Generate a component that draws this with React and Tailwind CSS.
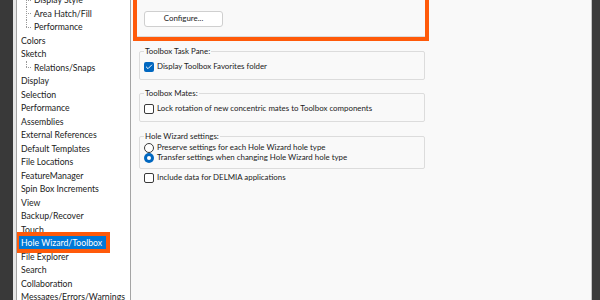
import { Check } from "lucide-react";

const items = [
  { label: "Display Style", child: true },
  { label: "Area Hatch/Fill", child: true },
  { label: "Performance", child: true, last: true },
  { label: "Colors" },
  { label: "Sketch" },
  { label: "Relations/Snaps", child: true, last: true },
  { label: "Display" },
  { label: "Selection" },
  { label: "Performance" },
  { label: "Assemblies" },
  { label: "External References" },
  { label: "Default Templates" },
  { label: "File Locations" },
  { label: "FeatureManager" },
  { label: "Spin Box Increments" },
  { label: "View" },
  { label: "Backup/Recover" },
  { label: "Touch" },
  { label: "Hole Wizard/Toolbox", selected: true },
  { label: "File Explorer" },
  { label: "Search" },
  { label: "Collaboration" },
  { label: "Messages/Errors/Warnings" },
];

function TreeRow({ item }) {
  return (
    <div className="flex items-center h-[13.5px] whitespace-nowrap">
      {item.child && (
        <span className="relative w-[13px] h-full shrink-0">
          <span
            className={`absolute left-[5px] top-0 border-l border-dotted border-[#9a9a9a] ${
              item.last ? "h-1/2" : "h-full"
            }`}
          />
          <span className="absolute left-[5px] top-1/2 w-[5px] border-t border-dotted border-[#9a9a9a]" />
        </span>
      )}
      {item.selected ? (
        <span className="-ml-[2px] pl-[2px] w-[87px] overflow-hidden bg-[#0078d7] text-white leading-[13px] outline-4 outline-[#ff5a0a]">
          {item.label}
        </span>
      ) : (
        <span>{item.label}</span>
      )}
    </div>
  );
}

function Checkbox({ checked }) {
  return checked ? (
    <span className="w-[10px] h-[10px] rounded-[2px] bg-[#0067c0] flex items-center justify-center shrink-0">
      <Check size={8} strokeWidth={3} className="text-white" />
    </span>
  ) : (
    <span className="w-[10px] h-[10px] rounded-[2px] border border-[#3a3a3a] bg-white shrink-0" />
  );
}

function Radio({ checked }) {
  return checked ? (
    <span className="w-[10px] h-[10px] rounded-full bg-[#0067c0] flex items-center justify-center shrink-0">
      <span className="w-[4px] h-[4px] rounded-full bg-white" />
    </span>
  ) : (
    <span className="w-[10px] h-[10px] rounded-full border border-[#3a3a3a] bg-white shrink-0" />
  );
}

function Group({ title, className, children }) {
  return (
    <div className={`relative ml-[8px] w-[286px] border border-[#dcdcdc] rounded-[2px] ${className}`}>
      <span className="absolute -top-[7px] left-[4px] px-[1px] bg-[#f9f9f9] leading-[12px]">{title}</span>
      {children}
    </div>
  );
}

export default function App() {
  return (
    <div
      className="flex w-[600px] h-[300px] overflow-hidden bg-[#f9f9f9] text-[#1b1b1b] text-[8.7px]"
      style={{ fontFamily: '"Segoe UI", Lato, "Noto Sans", sans-serif' }}
    >
      <div className="w-[13px] bg-[#393939] shrink-0" />
      <div className="w-[3px] bg-[#e6e6e6] shrink-0" />

      <div className="w-[115px] shrink-0 bg-white border-x border-[#a5a5a5] pl-[4px] overflow-hidden">
        <div className="-mt-[7px]">
          {items.map((item, i) => (
            <TreeRow key={i} item={item} />
          ))}
        </div>
      </div>

      <div className="flex-1 text-[7.9px]">
        <div className="ml-[2px] -mt-[4px] w-[296px] h-[45px] border-4 border-[#ff5a0a]">
          <div className="h-full border-b border-[#dcdcdc] pt-[11px] pl-[7px]">
            <button className="w-[79px] h-[16px] bg-white border border-[#cfcfcf] rounded-[3px] flex items-center justify-center leading-none">
              Configure...
            </button>
          </div>
        </div>

        <Group title="Toolbox Task Pane:" className="mt-[10px] h-[29px]">
          <div className="flex items-center gap-[3px] pl-[4px] pt-[9px]">
            <Checkbox checked />
            <span>Display Toolbox Favorites folder</span>
          </div>
        </Group>

        <Group title="Toolbox Mates:" className="mt-[13px] h-[29px]">
          <div className="flex items-center gap-[3px] pl-[4px] pt-[9px]">
            <Checkbox />
            <span>Lock rotation of new concentric mates to Toolbox components</span>
          </div>
        </Group>

        <Group title="Hole Wizard settings:" className="mt-[14px] h-[33px]">
          <div className="flex flex-col pl-[4px] pt-[6px]">
            <div className="flex items-center gap-[3px] h-[10px]">
              <Radio />
              <span>Preserve settings for each Hole Wizard hole type</span>
            </div>
            <div className="flex items-center gap-[3px] h-[10px]">
              <Radio checked />
              <span>Transfer settings when changing Hole Wizard hole type</span>
            </div>
          </div>
        </Group>

        <div className="flex items-center gap-[3px] ml-[13px] mt-[4px] h-[10px]">
          <Checkbox />
          <span>Include data for DELMIA applications</span>
        </div>
      </div>

      <div className="w-[1px] bg-[#c4c4c4] shrink-0" />
      <div className="w-[8px] bg-[#3c3c3c] shrink-0" />
    </div>
  );
}
